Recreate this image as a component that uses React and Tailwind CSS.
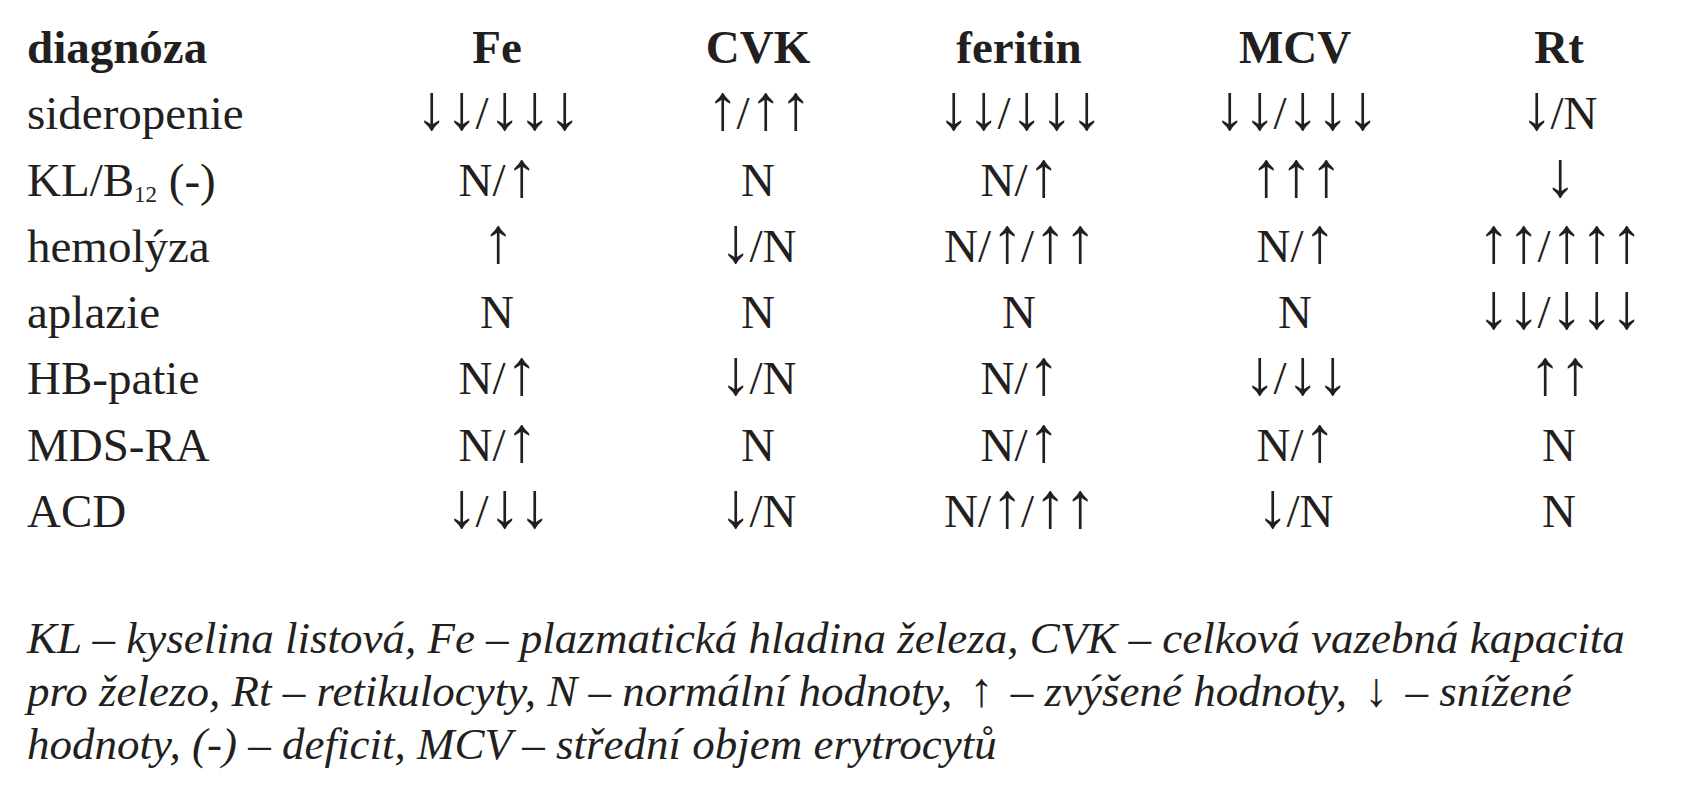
const columns = ["Fe", "CVK", "feritin", "MCV", "Rt"];

const rows = [
  { label: "sideropenie", values: ["↓↓/↓↓↓", "↑/↑↑", "↓↓/↓↓↓", "↓↓/↓↓↓", "↓/N"] },
  { label: "KL/B12", values: ["N/↑", "N", "N/↑", "↑↑↑", "↓"] },
  { label: "hemolýza", values: ["↑", "↓/N", "N/↑/↑↑", "N/↑", "↑↑/↑↑↑"] },
  { label: "aplazie", values: ["N", "N", "N", "N", "↓↓/↓↓↓"] },
  { label: "HB-patie", values: ["N/↑", "↓/N", "N/↑", "↓/↓↓", "↑↑"] },
  { label: "MDS-RA", values: ["N/↑", "N", "N/↑", "N/↑", "N"] },
  { label: "ACD", values: ["↓/↓↓", "↓/N", "N/↑/↑↑", "↓/N", "N"] },
];

// arrows in the serif font are small, so set them larger to get the tall thin look
const Value = ({ text }) => {
  const parts = text.split(/([↑↓]+)/).filter(Boolean);
  return (
    <>
      {parts.map((p, i) =>
        /[↑↓]/.test(p) ? (
          <span key={i} className="inline-block text-[64px] leading-[44px] tracking-[-2px]">
            {p}
          </span>
        ) : (
          <span key={i}>{p}</span>
        )
      )}
    </>
  );
};

const RowLabel = ({ label }) => {
  if (label === "KL/B12") {
    return (
      <span>
        KL/B<sub className="text-[23px] align-baseline relative top-[6px]">12</sub> (-)
      </span>
    );
  }
  return <span>{label}</span>;
};

const Arrow = ({ children }) => (
  <span className="inline-block not-italic text-[48px] leading-[36px] mx-[6px]">{children}</span>
);

export default function App() {
  return (
    <div className="w-[1682px] h-[800px] bg-white text-[#231f20] font-['Liberation_Serif','Times_New_Roman',serif]">
      {/* table */}
      <div className="grid grid-cols-[339px_262px_260px_262px_290px_238px] pl-[27px] pt-[14px] text-[47px] leading-[66.3px]">
        <div className="font-bold">diagnóza</div>
        {columns.map((c) => (
          <div key={c} className="font-bold text-center">
            {c}
          </div>
        ))}
        {rows.map((row) => (
          <div key={row.label} className="contents">
            <div className="whitespace-nowrap">
              <RowLabel label={row.label} />
            </div>
            {row.values.map((v, i) => (
              <div key={i} className="text-center whitespace-nowrap">
                <Value text={v} />
              </div>
            ))}
          </div>
        ))}
      </div>

      {/* legend */}
      <p className="pl-[27px] mt-[68px] italic text-[45px] leading-[53px] whitespace-nowrap">
        KL – kyselina listová, Fe – plazmatická hladina železa, CVK – celková vazebná kapacita
        <br />
        pro železo, Rt – retikulocyty, N – normální hodnoty, <Arrow>↑</Arrow> – zvýšené hodnoty, <Arrow>↓</Arrow> – snížené
        <br />
        hodnoty, (-) – deficit, MCV – střední objem erytrocytů
      </p>
    </div>
  );
}
